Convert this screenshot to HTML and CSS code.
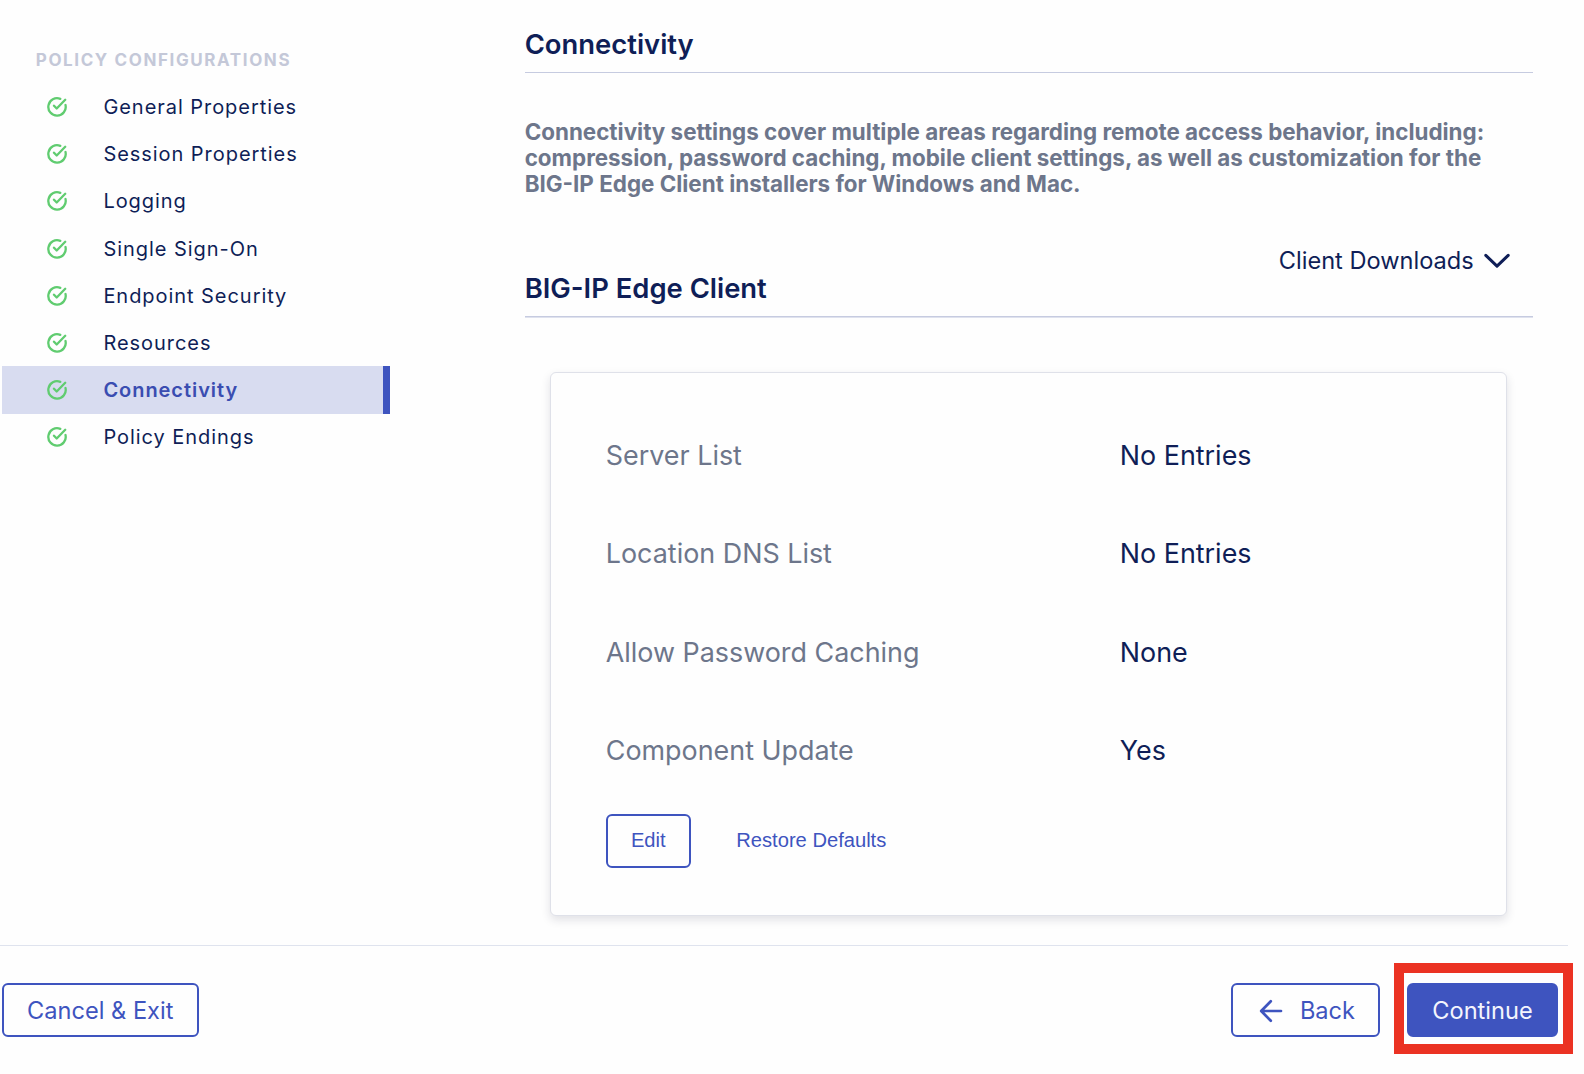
FILE: index.html
```
<!DOCTYPE html>
<html lang="en">
<head>
<meta charset="utf-8">
<title>Connectivity</title>
<link rel="stylesheet" href="styles.css">
</head>
<body>
<svg class="sprite" width="0" height="0" aria-hidden="true">
  <symbol id="check" viewBox="0 0 20 20">
    <path d="M13.3 1.9A8.7 8.7 0 1 0 18.5 8M7 8.7l2.7 2.8 8.5-8.7"/>
  </symbol>
</svg>
<div class="page">
  <div class="body">
    <nav class="sidebar">
      <h2 class="sidebar-title">POLICY CONFIGURATIONS</h2>
      <ul class="steps">
        <li class="step"><svg class="check"><use href="#check"/></svg>General Properties</li>
        <li class="step"><svg class="check"><use href="#check"/></svg>Session Properties</li>
        <li class="step"><svg class="check"><use href="#check"/></svg>Logging</li>
        <li class="step"><svg class="check"><use href="#check"/></svg>Single Sign-On</li>
        <li class="step"><svg class="check"><use href="#check"/></svg>Endpoint Security</li>
        <li class="step"><svg class="check"><use href="#check"/></svg>Resources</li>
        <li class="step active"><svg class="check"><use href="#check"/></svg>Connectivity</li>
        <li class="step"><svg class="check"><use href="#check"/></svg>Policy Endings</li>
      </ul>
    </nav>
    <main class="content">
      <header class="section-head first"><h1 class="heading">Connectivity</h1></header>
      <p class="intro">Connectivity settings cover multiple areas regarding remote access behavior, including:<br>compression, password caching, mobile client settings, as well as customization for the<br>BIG-IP Edge Client installers for Windows and Mac.</p>
      <header class="section-head second">
        <h2 class="heading">BIG-IP Edge Client</h2>
        <div class="downloads">Client Downloads
          <svg class="chevron" viewBox="0 0 26 16"><path d="M1.8 2.4L13 13.2 24.2 2.4"/></svg>
        </div>
      </header>
      <section class="card">
        <dl class="rows">
          <dt>Server List</dt><dd>No Entries</dd>
          <dt>Location DNS List</dt><dd>No Entries</dd>
          <dt>Allow Password Caching</dt><dd>None</dd>
          <dt>Component Update</dt><dd>Yes</dd>
        </dl>
        <div class="card-actions">
          <button class="btn edit">Edit</button>
          <button class="link">Restore Defaults</button>
        </div>
      </section>
    </main>
  </div>
  <footer class="footer">
    <button class="btn cancel">Cancel &amp; Exit</button>
    <button class="btn back"><svg class="arrow" viewBox="0 0 24 24"><path d="M22 12H2.5M11.8 2.2L2.2 12l9.6 9.8"/></svg>Back</button>
    <div class="highlight"><button class="btn primary">Continue</button></div>
  </footer>
</div>
</body>
</html>
```
FILE: styles.css
```
* { box-sizing: border-box; margin: 0; padding: 0; }

body {
  width: 1584px;
  height: 1074px;
  overflow: hidden;
  background: #fefefe;
  color: #0f1e57;
  font-family: Inter, "Liberation Sans", sans-serif;
}

.sprite { position: absolute; }

.page { display: flex; flex-direction: column; height: 1074px; }

.body { display: flex; height: 945px; }

/* Sidebar */
.sidebar { width: 390px; padding: 48px 0 0 2px; }

.sidebar-title {
  height: 35.5px;
  padding-left: 33.8px;
  font-size: 17px;
  font-weight: 700;
  line-height: 24px;
  letter-spacing: 1.6px;
  color: #c4c8d8;
}

.steps { list-style: none; }

.step {
  display: flex;
  align-items: center;
  gap: 36.6px;
  height: 47.17px;
  padding-left: 44.8px;
  font-size: 20px;
  letter-spacing: .95px;
}

.step.active {
  background: #d8dcf0;
  border-right: 7px solid #3e54bf;
  color: #3a4db1;
  font-weight: 600;
}

.check {
  width: 20px;
  height: 20px;
  fill: none;
  stroke: #60cc70;
  stroke-width: 2.3;
  stroke-linecap: round;
  stroke-linejoin: round;
}

/* Main column */
.content { width: 1008px; margin-left: 134.7px; }

.section-head {
  display: flex;
  align-items: flex-end;
  justify-content: space-between;
  padding-bottom: 12px;
  border-bottom: 1px solid #c6cbe0;
}

.section-head.first { height: 73px; }

.section-head.second { height: 78px; box-shadow: 0 1px #dfe2ee; }

.heading {
  font-size: 27.4px;
  font-weight: 600;
  line-height: 32px;
}

.intro {
  height: 166px;
  padding-top: 46px;
  font-size: 22.4px;
  font-weight: 700;
  line-height: 25.9px;
  color: #6d768b;
  white-space: nowrap;
}

.downloads {
  display: flex;
  align-items: center;
  align-self: flex-start;
  gap: 10.6px;
  margin: 8px 22.4px 0 0;
  font-size: 23.6px;
  line-height: 28px;
}

.chevron {
  width: 26px;
  height: 16px;
  fill: none;
  stroke: #0f1e57;
  stroke-width: 3;
  stroke-linecap: round;
  stroke-linejoin: round;
}

.card {
  width: 957px;
  height: 544px;
  margin: 54.6px 0 0 25.3px;
  padding: 33.3px 54px 0 54.8px;
  border: 1px solid #dfe1e9;
  border-radius: 6px;
  box-shadow: 0 4px 10px rgba(30, 34, 60, .13);
  background: #fefefe;
}

.rows {
  display: grid;
  grid-template-columns: 514px 1fr;
  grid-auto-rows: 98.3px;
  align-items: center;
  font-size: 26.9px;
}

.rows dt { color: #6d768b; }

.card-actions { display: flex; align-items: center; gap: 45.5px; margin-top: 14.6px; }

.btn {
  display: flex;
  align-items: center;
  justify-content: center;
  height: 54px;
  border: 2px solid #3e54bf;
  border-radius: 6px;
  background: transparent;
  color: #3e54bf;
  font: 400 23.6px Inter, "Liberation Sans", sans-serif;
}

.btn.edit { width: 85px; }

.btn.edit, .link { font: 400 20.15px "Liberation Sans", Arial, sans-serif; }

.link { border: 0; background: none; color: #3e54bf; }

/* Footer */
.footer {
  display: flex;
  align-items: flex-start;
  width: 1573px;
  height: 129px;
}

.footer::before {
  content: "";
  width: 1568px;
  height: 1px;
  margin-right: -1568px;
  background: #dfe3ee;
}

.btn.cancel { width: 196.5px; margin: 38px 0 0 2px; }

.btn.back { width: 149px; gap: 17px; margin: 38px 14px 0 auto; padding: 1px 0 0 3px; }

.arrow {
  width: 24px;
  height: 24px;
  fill: none;
  stroke: #3e54bf;
  stroke-width: 2.7;
  stroke-linecap: round;
  stroke-linejoin: round;
}

.highlight {
  width: 179px;
  height: 91px;
  margin-top: 18px;
  padding: 10px 4px 0 3px;
  border: 10px solid #eb3223;
}

.btn.primary { width: 151px; background: #3e54bf; color: #f4f5fd; }
```
